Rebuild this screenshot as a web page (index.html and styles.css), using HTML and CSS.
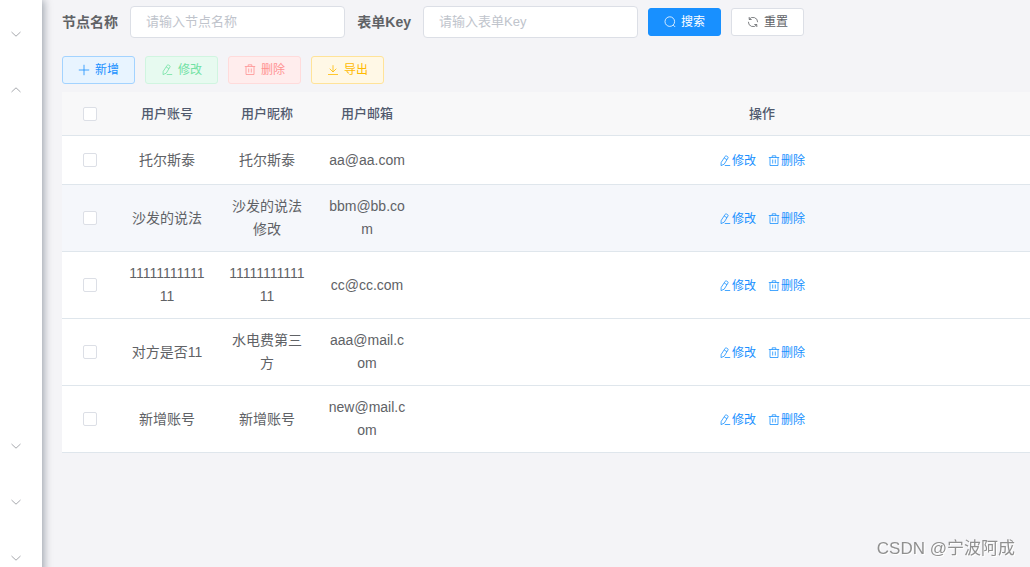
FILE: index.html
```html
<!DOCTYPE html>
<html lang="zh-CN">
<head>
<meta charset="utf-8">
<title>节点表单</title>
<link rel="stylesheet" href="styles.css">
</head>
<body>
<svg class="sprite" aria-hidden="true">
  <symbol id="down" viewBox="0 0 12 12"><path d="M1.5 4 6 8.2 10.5 4"/></symbol>
  <symbol id="up" viewBox="0 0 12 12"><path d="M1.5 8 6 3.8 10.5 8"/></symbol>
  <symbol id="plus" viewBox="0 0 12 12"><path d="M6 .8v10.4M.8 6h10.4"/></symbol>
  <symbol id="edit" viewBox="0 0 12 12"><path d="M6.2 1.3Q6.7.6 7.5 1L8.8 1.8Q9.4 2.3 9 3L5.2 9.2 2 10.6 2.2 7.4ZM5.2 3 8 4.7M5.8 10.5h5.4"/></symbol>
  <symbol id="trash" viewBox="0 0 12 12"><path d="M.8 2.5h10.4M4.2 2.5V.8h3.6v1.7M2 2.5v8h8v-8M4.7 4.5v4M7.3 4.5v4"/></symbol>
  <symbol id="download" viewBox="0 0 12 12"><path d="M6 1.2v6.6M2.7 4.7 6 8 9.3 4.7M1 10.5h10"/></symbol>
  <symbol id="search" viewBox="0 0 12 12"><circle cx="5.8" cy="5.6" r="4.8"/><path d="m9.2 9 2 2"/></symbol>
  <symbol id="refresh" viewBox="0 0 12 12"><path d="M2.2 3.4A4.6 4.6 0 0 1 10.6 6.2M1.4 5.8A4.6 4.6 0 0 0 9.8 8.6M2.2 1v2.5H4.7M9.8 11V8.5H7.3"/></symbol>
</svg>
<div class="app">
  <nav class="sidebar" aria-label="菜单">
    <button class="menu" aria-label="展开菜单"><svg class="icon"><use href="#down"/></svg></button>
    <button class="menu menu-open" aria-label="收起菜单"><svg class="icon"><use href="#up"/></svg></button>
    <button class="menu" aria-label="展开菜单"><svg class="icon"><use href="#down"/></svg></button>
    <button class="menu" aria-label="展开菜单"><svg class="icon"><use href="#down"/></svg></button>
    <button class="menu" aria-label="展开菜单"><svg class="icon"><use href="#down"/></svg></button>
  </nav>
  <main class="main">
    <form class="search">
      <div class="field"><label class="label" for="name">节点名称</label><input class="input" id="name" type="text" placeholder="请输入节点名称"></div>
      <div class="field"><label class="label" for="key">表单Key</label><input class="input" id="key" type="text" placeholder="请输入表单Key"></div>
      <button type="button" class="btn btn-solid"><svg class="icon"><use href="#search"/></svg>搜索</button>
      <button type="button" class="btn"><svg class="icon"><use href="#refresh"/></svg>重置</button>
    </form>
    <div class="toolbar">
      <button class="btn btn-primary"><svg class="icon"><use href="#plus"/></svg>新增</button>
      <button class="btn btn-success" disabled><svg class="icon"><use href="#edit"/></svg>修改</button>
      <button class="btn btn-danger" disabled><svg class="icon"><use href="#trash"/></svg>删除</button>
      <button class="btn btn-warning"><svg class="icon"><use href="#download"/></svg>导出</button>
    </div>
    <table class="table">
      <colgroup><col class="col-check"><col class="col-text"><col class="col-text"><col class="col-text"><col></colgroup>
      <thead>
        <tr><th><input class="check" type="checkbox" aria-label="全选"></th><th>用户账号</th><th>用户昵称</th><th>用户邮箱</th><th class="ops">操作</th></tr>
      </thead>
      <tbody>
        <tr>
          <td><input class="check" type="checkbox" aria-label="选择"></td><td>托尔斯泰</td><td>托尔斯泰</td><td>aa@aa.com</td>
          <td class="ops"><button class="link"><svg class="icon"><use href="#edit"/></svg>修改</button><button class="link"><svg class="icon"><use href="#trash"/></svg>删除</button></td>
        </tr>
        <tr class="hover">
          <td><input class="check" type="checkbox" aria-label="选择"></td><td>沙发的说法</td><td>沙发的说法修改</td><td>bbm@bb.com</td>
          <td class="ops"><button class="link"><svg class="icon"><use href="#edit"/></svg>修改</button><button class="link"><svg class="icon"><use href="#trash"/></svg>删除</button></td>
        </tr>
        <tr>
          <td><input class="check" type="checkbox" aria-label="选择"></td><td>1111111111111</td><td>1111111111111</td><td>cc@cc.com</td>
          <td class="ops"><button class="link"><svg class="icon"><use href="#edit"/></svg>修改</button><button class="link"><svg class="icon"><use href="#trash"/></svg>删除</button></td>
        </tr>
        <tr>
          <td><input class="check" type="checkbox" aria-label="选择"></td><td>对方是否11</td><td>水电费第三方</td><td>aaa@mail.com</td>
          <td class="ops"><button class="link"><svg class="icon"><use href="#edit"/></svg>修改</button><button class="link"><svg class="icon"><use href="#trash"/></svg>删除</button></td>
        </tr>
        <tr>
          <td><input class="check" type="checkbox" aria-label="选择"></td><td>新增账号</td><td>新增账号</td><td>new@mail.com</td>
          <td class="ops"><button class="link"><svg class="icon"><use href="#edit"/></svg>修改</button><button class="link"><svg class="icon"><use href="#trash"/></svg>删除</button></td>
        </tr>
      </tbody>
    </table>
  </main>
</div>
<div class="watermark">CSDN @宁波阿成</div>
</body>
</html>
```
FILE: styles.css
```css
* { box-sizing: border-box; }
body {
  margin: 0;
  background: #f4f4f7;
  color: #606266;
  font: 14px/23px "Liberation Sans", "Noto Sans CJK SC", sans-serif;
}
button, input { font-family: inherit; }
button { cursor: pointer; }
.sprite { display: none; }
.icon {
  flex: none;
  width: 12px;
  height: 12px;
  fill: none;
  stroke: currentColor;
  stroke-width: 0.8;
}
.app { display: flex; min-height: 100vh; }

.sidebar {
  display: flex;
  flex-direction: column;
  flex: none;
  width: 42px;
  padding-top: 6px;
  background: #fff;
  box-shadow: 2px 0 8px rgba(0, 21, 41, 0.35);
}
.menu {
  display: flex;
  flex: none;
  align-items: center;
  height: 56px;
  padding: 0 10px;
  border: 0;
  background: none;
  color: #909399;
}
.menu-open { margin-bottom: 300px; }
.menu:last-child { height: 55px; }

.main { flex: 1; min-width: 0; padding: 6px 0 0 20px; }
.search { display: flex; align-items: center; gap: 10px; margin-bottom: 18px; }
.field { display: flex; align-items: center; }
.label {
  width: 68px;
  padding-right: 12px;
  text-align: right;
  font-weight: 700;
  line-height: 30px;
  white-space: nowrap;
}
.input {
  width: 215px;
  height: 32px;
  padding: 0 15px 2px;
  border: 1px solid #dcdfe6;
  border-radius: 4px;
  background: #fff;
  color: #606266;
  font-size: 13px;
}
.input::placeholder { color: #c0c4cc; }
.toolbar { display: flex; gap: 10px; margin-bottom: 8px; }
.btn {
  display: flex;
  align-items: center;
  justify-content: center;
  gap: 5px;
  width: 73px;
  height: 28px;
  padding: 0;
  border: 1px solid #dcdfe6;
  border-radius: 3px;
  background: #fff;
  color: #606266;
  font-size: 12px;
  line-height: 12px;
}
.btn-solid { border-color: #1890ff; background: #1890ff; color: #fff; }
.btn-primary { border-color: #a3d3ff; background: #e8f4ff; color: #1890ff; }
.btn-success { border-color: #d0f5e0; background: #e7faf0; color: #71e2a3; }
.btn-danger { border-color: #ffdbdb; background: #ffeded; color: #ff9292; }
.btn-warning { border-color: #ffe399; background: #fff8e6; color: #ffba00; }

.table {
  width: 100%;
  table-layout: fixed;
  border-collapse: separate;
  border-spacing: 0;
  background: #fff;
}
.col-check { width: 55px; }
.col-text { width: 100px; }
th, td {
  padding: 10px;
  border-bottom: 1px solid #dfe6ec;
  text-align: center;
  vertical-align: middle;
  overflow-wrap: anywhere;
}
th {
  background: #f8f8f9;
  color: #515a6e;
  font-size: 13px;
  font-weight: 500;
}
tbody tr { height: 49px; }
.hover { background: #f5f7fb; }
/* Buttons sit at the centre of the part right of the data columns. */
.table .ops { padding-left: 87px; }
.check {
  display: block;
  appearance: none;
  width: 14px;
  height: 14px;
  margin: 0 auto;
  border: 1px solid #dcdfe6;
  border-radius: 2px;
  background: #fff;
}
.check:checked { border-color: #1890ff; background: #1890ff; }
.link {
  display: inline-flex;
  align-items: center;
  gap: 1px;
  padding: 0;
  border: 0;
  background: none;
  color: #1890ff;
  font-size: 12px;
  line-height: 12px;
  vertical-align: middle;
}
.link + .link { margin-left: 12px; }
.watermark {
  position: fixed;
  right: 15px;
  bottom: 6px;
  color: #909090;
  font-size: 17px;
  line-height: 24px;
  text-shadow: 1px 1px 0 #fff;
}
```
